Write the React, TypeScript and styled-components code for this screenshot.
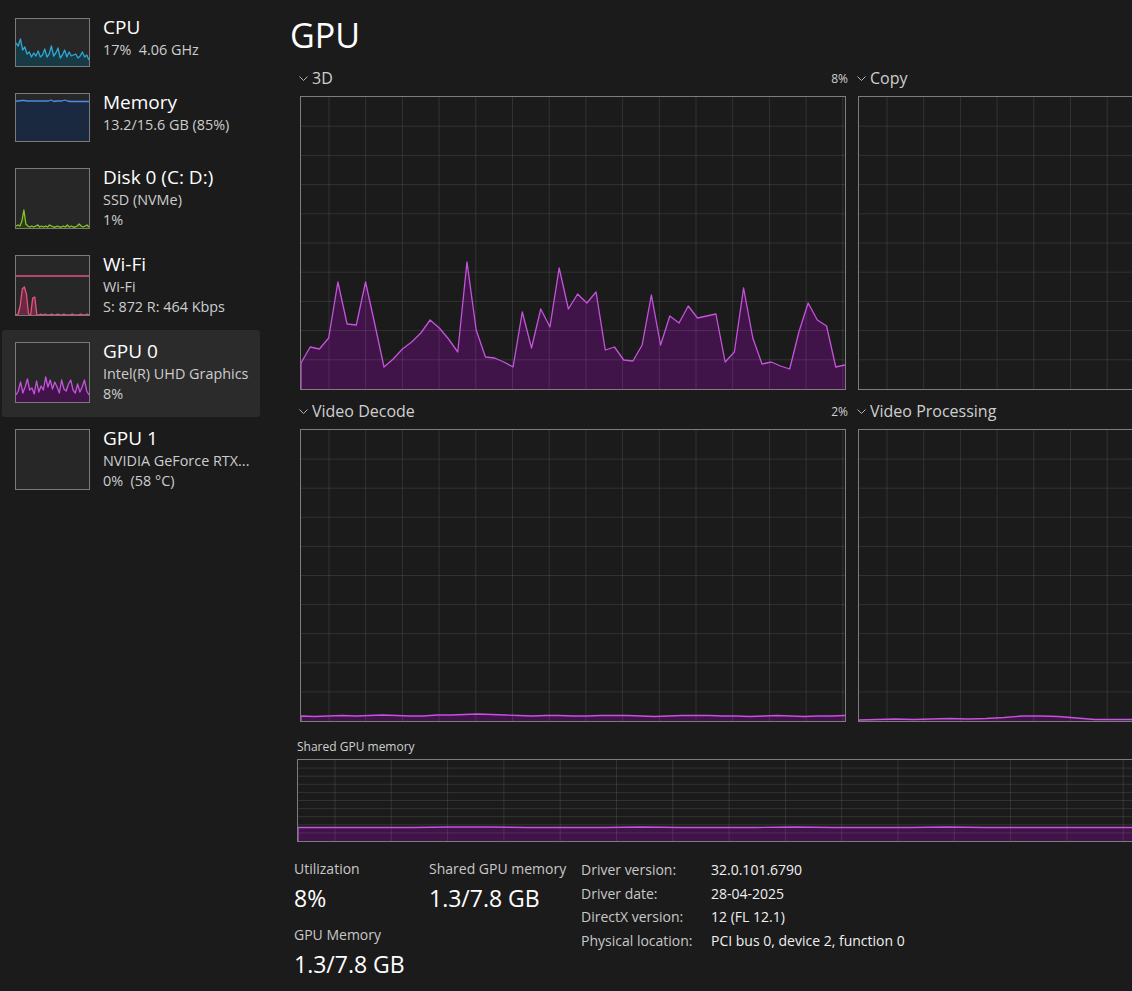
import React from "react"
import styled, { createGlobalStyle } from "styled-components"

const GlobalStyle = createGlobalStyle`
  html, body {
    margin: 0;
    padding: 0;
    background: #1b1b1b;
    overflow: hidden;
  }
  body {
    font-family: "Open Sans", "Noto Sans", sans-serif;
    color: #ffffff;
  }
`

type Series = {
  values: number[]
  line: string
  fill: string
  edge?: boolean
  level?: number
}

const buildPaths = (values: number[], w: number, h: number, edge?: boolean) => {
  const step = w / (values.length - 1)
  const pts = values.map((v, i) => `${(i * step).toFixed(2)},${v}`).join(" L")
  return {
    line: edge ? `M0,${h} L${pts}` : `M${pts}`,
    area: `M0,${h} L${pts} L${w},${h} Z`,
  }
}

type GridSpec = {
  rows: number
  offset: number
  step: number
}

type ChartProps = {
  w: number
  h: number
  grid?: GridSpec
  series?: Series
}

const Chart = ({ w, h, grid, series }: ChartProps) => {
  const paths = series ? buildPaths(series.values, w, h, series.edge) : null
  const verticals: number[] = []
  const horizontals: number[] = []
  if (grid) {
    for (let x = grid.offset; x < w; x += grid.step) verticals.push(x)
    for (let k = 1; k < grid.rows; k++) horizontals.push((h * k) / grid.rows)
  }
  return (
    <ChartSvg viewBox={`0 0 ${w} ${h}`} preserveAspectRatio="none">
      {paths && series && <path d={paths.area} fill={series.fill} />}
      {verticals.map((x) => (
        <line key={`v${x}`} x1={x} x2={x} y1={0} y2={h} stroke="rgba(255,255,255,0.1)" strokeWidth={1} vectorEffect="non-scaling-stroke" />
      ))}
      {horizontals.map((y) => (
        <line key={`h${y}`} x1={0} x2={w} y1={y} y2={y} stroke="rgba(255,255,255,0.1)" strokeWidth={1} vectorEffect="non-scaling-stroke" />
      ))}
      {series?.level !== undefined && (
        <line x1={0} x2={w} y1={series.level} y2={series.level} stroke={series.line} strokeWidth={1.3} vectorEffect="non-scaling-stroke" />
      )}
      {paths && series && (
        <path d={paths.line} fill="none" stroke={series.line} strokeWidth={1.3} strokeLinejoin="round" vectorEffect="non-scaling-stroke" />
      )}
    </ChartSvg>
  )
}

const Chevron = () => (
  <ChevronSvg viewBox="0 0 9 5">
    <polyline points="0.5,0.5 4.5,4.5 8.5,0.5" fill="none" stroke="#b5b5b5" strokeWidth={1} />
  </ChevronSvg>
)

const PURPLE = { line: "#c553dc", fill: "#401449" }

const devices = [
  {
    title: "CPU",
    lines: ["17%  4.06 GHz"],
    tall: false,
    series: {
      line: "#2ea6d6",
      fill: "#173a44",
      values: [24, 27, 20, 31, 28, 35, 33, 38, 34, 37, 32, 38, 36, 30, 38, 35, 27, 37, 34, 29, 39, 36, 31, 38, 33, 37, 36, 35, 39, 37, 33, 38, 36, 41],
    },
  },
  {
    title: "Memory",
    lines: ["13.2/15.6 GB (85%)"],
    tall: false,
    series: {
      line: "#4b8fe0",
      fill: "#1a2840",
      values: [7, 7, 6.5, 6.5, 7, 7, 7, 7, 7, 7, 7, 7, 7, 6, 7.5, 7, 7, 7, 6, 7, 7.5, 7.5, 7.5, 7.5, 7.5, 7.5, 7.5, 7.5],
    },
  },
  {
    title: "Disk 0 (C: D:)",
    lines: ["SSD (NVMe)", "1%"],
    tall: true,
    series: {
      line: "#86c22a",
      fill: "#2b3c16",
      values: [57, 56, 57, 52, 41, 55, 57, 58, 57, 58, 57, 56, 58, 57, 58, 57, 58, 56, 57, 58, 58, 57, 58, 58, 57, 58, 56, 58, 57, 58, 58, 57, 55, 57, 58, 57, 56, 58],
    },
  },
  {
    title: "Wi-Fi",
    lines: ["Wi-Fi", "S: 872 R: 464 Kbps"],
    tall: true,
    series: {
      line: "#e5557e",
      fill: "#6a2843",
      level: 20,
      values: [59, 58, 50, 33, 31, 38, 58, 59, 42, 41, 59, 59, 58, 59, 58, 59, 59, 58, 59, 59, 58, 59, 59, 58, 59, 59, 59, 58, 59, 59, 59, 58, 59, 59, 58, 59],
    },
  },
  {
    title: "GPU 0",
    lines: ["Intel(R) UHD Graphics", "8%"],
    tall: true,
    selected: true,
    series: {
      ...PURPLE,
      values: [52, 48, 39, 50, 44, 36, 47, 45, 51, 38, 49, 43, 47, 34, 44, 37, 46, 39, 44, 50, 37, 46, 48, 41, 37, 47, 50, 41, 49, 44, 37, 48, 52],
    },
  },
  {
    title: "GPU 1",
    lines: ["NVIDIA GeForce RTX...", "0%  (58 °C)"],
    tall: true,
  },
]

const abs3d = [363, 347, 349, 338, 282, 324, 325, 282, 324, 367, 359, 349, 342, 333, 320, 328, 339, 352, 262, 330, 357, 358, 362, 367, 312, 348, 309, 327, 268, 309, 294, 303, 292, 350, 347, 360, 361, 345, 295, 345, 316, 323, 306, 318, 316, 314, 362, 352, 288, 338, 364, 362, 366, 369, 332, 303, 320, 326, 367, 365]
const values3d = abs3d.map((v) => v - 97)

const decodeValues = [286, 286.5, 286, 285.5, 286, 285.5, 285, 285.5, 286, 286, 285, 285, 284.5, 284, 284.5, 285, 285.5, 286, 285.5, 285.5, 286, 286, 285.5, 285.5, 285.5, 286, 286.5, 286, 285.5, 285.5, 285.5, 286, 286, 286.5, 286, 285.5, 286, 286.5, 286, 286, 285.5]
const processValues = [290, 289.5, 289, 289.5, 289, 288.5, 289, 288.5, 287.5, 286, 286, 286.5, 288, 289.5, 289.5, 289.5, 289.5, 289.5, 289.5, 289.5, 289.5, 289.5, 289, 289.5, 289.5, 289.5, 289, 289.5, 289.5, 289.5, 289.5]
const sharedValues = [67.5, 67.5, 67.5, 67.5, 67, 67, 67.5, 67.5, 67.5, 67, 67.5, 67.5, 67.5, 67, 67.5, 67.5, 67.5, 67, 67.5, 67.5, 67.5, 67.5, 67.5, 67.5, 67.5, 67.5, 67.5, 67.5, 67.5, 67.5]

const mainGrid: GridSpec = { rows: 10, offset: 28, step: 36.7 }

const panels = [
  { label: "3D", pct: "8%", h: 294, values: values3d },
  { label: "Copy", pct: "", h: 294, values: null },
  { label: "Video Decode", pct: "2%", h: 293, values: decodeValues },
  { label: "Video Processing", pct: "", h: 293, values: processValues },
]

const details = [
  ["Driver version:", "32.0.101.6790"],
  ["Driver date:", "28-04-2025"],
  ["DirectX version:", "12 (FL 12.1)"],
  ["Physical location:", "PCI bus 0, device 2, function 0"],
]

export default function App() {
  return (
    <>
      <GlobalStyle />
      <Window>
        <Sidebar>
          {devices.map((d) => {
            const h = d.tall ? 61 : 49
            return (
              <DeviceItem key={d.title} $selected={!!d.selected}>
                <Thumb $h={h}>
                  {d.series && (
                    <Chart w={73} h={h - 2} series={d.series} />
                  )}
                </Thumb>
                <DeviceText>
                  <DeviceTitle>{d.title}</DeviceTitle>
                  {d.lines.map((l) => (
                    <DeviceSub key={l}>{l}</DeviceSub>
                  ))}
                </DeviceText>
              </DeviceItem>
            )
          })}
        </Sidebar>

        <Main>
          <PageTitle>GPU</PageTitle>

          <GraphGrid>
            {panels.map((p, i) => (
              <Panel key={p.label} $top={i >= 2}>
                <PanelHeader>
                  <Chevron />
                  <PanelLabel>{p.label}</PanelLabel>
                  <PanelPct>{p.pct}</PanelPct>
                </PanelHeader>
                <GraphBox $h={p.h}>
                  <Chart
                    w={544}
                    h={p.h - 2}
                    grid={mainGrid}
                    series={p.values ? { ...PURPLE, values: p.values, edge: true } : undefined}
                  />
                </GraphBox>
              </Panel>
            ))}
          </GraphGrid>

          <SharedSection>
            <SmallLabel>Shared GPU memory</SmallLabel>
            <SharedBox>
              <Chart
                w={1108}
                h={81}
                grid={{ rows: 10, offset: 37, step: 56.3 }}
                series={{ ...PURPLE, values: sharedValues, edge: true }}
              />
            </SharedBox>
          </SharedSection>

          <Stats>
            <StatCol $w={135}>
              <StatLabel>Utilization</StatLabel>
              <StatValue>8%</StatValue>
              <StatLabel $spaced>GPU Memory</StatLabel>
              <StatValue>1.3/7.8 GB</StatValue>
            </StatCol>
            <StatCol $w={152}>
              <StatLabel>Shared GPU memory</StatLabel>
              <StatValue>1.3/7.8 GB</StatValue>
            </StatCol>
            <InfoTable>
              {details.map(([k, v]) => (
                <React.Fragment key={k}>
                  <InfoKey>{k}</InfoKey>
                  <InfoValue>{v}</InfoValue>
                </React.Fragment>
              ))}
            </InfoTable>
          </Stats>
        </Main>
      </Window>
    </>
  )
}

const Window = styled.div`
  display: flex;
  width: 1132px;
  height: 991px;
  overflow: hidden;
  background: #1b1b1b;
`

const Sidebar = styled.nav`
  width: 262px;
  flex-shrink: 0;
  padding-top: 6px;
  display: flex;
  flex-direction: column;
`

const DeviceItem = styled.div<{ $selected: boolean }>`
  display: flex;
  align-items: flex-start;
  gap: 13px;
  margin: 0 2px;
  padding: 12px 13px 14px;
  border-radius: 3px;
  background: ${(p) => (p.$selected ? "#2b2b2b" : "transparent")};
`

const Thumb = styled.div<{ $h: number }>`
  width: 75px;
  height: ${(p) => p.$h}px;
  flex-shrink: 0;
  box-sizing: border-box;
  border: 1px solid #7a7a7a;
  background: #272727;
`

const DeviceText = styled.div`
  margin-top: -4px;
  display: flex;
  flex-direction: column;
  white-space: pre;
`

const DeviceTitle = styled.div`
  font-size: 19px;
  line-height: 26px;
  color: #ffffff;
`

const DeviceSub = styled.div`
  font-size: 14.4px;
  line-height: 19.5px;
  color: #cdcdcd;
`

const Main = styled.main`
  flex: 1;
  min-width: 0;
  overflow: hidden;
  padding: 15px 0 0 32px;
`

const PageTitle = styled.h1`
  margin: 0 0 12px -4px;
  font-size: 34px;
  line-height: 40px;
  font-weight: 400;
  color: #ffffff;
`

const GraphGrid = styled.div`
  display: grid;
  grid-template-columns: 546px 546px;
  column-gap: 12px;
  margin-left: 6px;
`

const Panel = styled.section<{ $top: boolean }>`
  display: flex;
  flex-direction: column;
  margin-top: ${(p) => (p.$top ? "10px" : "0")};
`

const PanelHeader = styled.div`
  display: flex;
  align-items: center;
  height: 22px;
  margin-bottom: 7px;
`

const ChevronSvg = styled.svg`
  width: 9px;
  height: 5px;
  margin: 0 4px 0 -1px;
  flex-shrink: 0;
`

const PanelLabel = styled.span`
  flex: 1;
  font-size: 16px;
  color: #cfcfcf;
`

const PanelPct = styled.span`
  font-size: 12px;
  color: #cfcfcf;
  margin-right: -2px;
`

const GraphBox = styled.div<{ $h: number }>`
  height: ${(p) => p.$h}px;
  box-sizing: border-box;
  border: 1px solid #7d7d7d;
`

const ChartSvg = styled.svg`
  display: block;
  width: 100%;
  height: 100%;
`

const SharedSection = styled.section`
  margin: 17px 0 0 3px;
`

const SmallLabel = styled.div`
  font-size: 12px;
  line-height: 16px;
  color: #cfcfcf;
  margin-bottom: 4px;
`

const SharedBox = styled.div`
  width: 1110px;
  height: 83px;
  box-sizing: border-box;
  border: 1px solid #7d7d7d;
`

const Stats = styled.div`
  display: flex;
  align-items: flex-start;
  margin-top: 17px;
`

const StatCol = styled.div<{ $w: number }>`
  width: ${(p) => p.$w}px;
  display: flex;
  flex-direction: column;
`

const StatLabel = styled.div<{ $spaced?: boolean }>`
  font-size: 14px;
  line-height: 20px;
  color: #c8c8c8;
  margin-top: ${(p) => (p.$spaced ? "12px" : "0")};
  margin-bottom: 4px;
`

const StatValue = styled.div`
  font-size: 23px;
  line-height: 30px;
  color: #ffffff;
`

const InfoTable = styled.div`
  display: grid;
  grid-template-columns: 130px auto;
  font-size: 14px;
  line-height: 23.6px;
  margin-top: -1px;
`

const InfoKey = styled.div`
  color: #c8c8c8;
`

const InfoValue = styled.div`
  color: #f0f0f0;
`
